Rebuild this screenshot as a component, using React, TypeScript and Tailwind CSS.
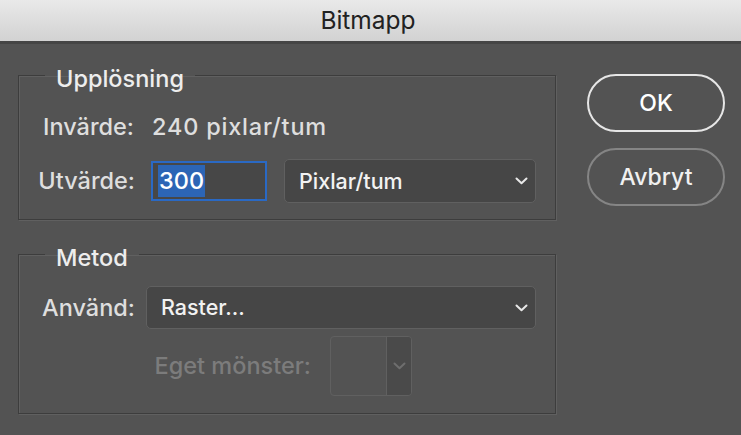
import React from "react";

// ─────────────────────────────
// Bitmapp dialog (Photoshop style)
// ─────────────────────────────
const font = "font-['Inter','Liberation_Sans',sans-serif]";

function Chevron({ className = "" }: { className?: string }) {
  return (
    <svg width="13" height="8" viewBox="0 0 13 8" className={className}>
      <path d="M1.5 1.5 L6.5 6.2 L11.5 1.5" fill="none" stroke="currentColor" strokeWidth="2" strokeLinecap="round" strokeLinejoin="round" />
    </svg>
  );
}

function Group({ title, children, className = "" }: { title: string; children: React.ReactNode; className?: string }) {
  return (
    <fieldset
      className={`border border-[#3d3d3d] shadow-[1px_1px_0_#606060,inset_1px_1px_0_#606060] px-0 ${className}`}
    >
      <legend className="ml-[26px] px-[11px] h-[28px] leading-[36px] text-[23.5px] font-medium text-[#ededed]">{title}</legend>
      {children}
    </fieldset>
  );
}

function Select({ value, className = "" }: { value: string; className?: string }) {
  return (
    <div
      className={`flex items-center justify-between rounded-[5px] border border-[#606060] bg-[#464646] pl-[14px] pr-[7px] text-[21.5px] font-medium text-[#f2f2f2] ${className}`}
    >
      <span>{value}</span>
      <Chevron className="text-[#e8e8e8]" />
    </div>
  );
}

export default function App() {
  return (
    <div className={`w-[741px] h-[435px] bg-[#535353] overflow-hidden ${font}`}>
      {/* タイトルバー */}
      <div className="h-[44px] border-b-[3px] border-[#454545] bg-gradient-to-b from-[#e9e9e9] to-[#d2d2d2] flex items-center justify-center">
        <span className="text-[24.5px] text-[#222] pr-[5px]">Bitmapp</span>
      </div>

      <div className="flex pl-[18px] pt-[17px]">
        {/* 左カラム */}
        <div className="w-[538px] flex flex-col">
          <Group title="Upplösning" className="pb-[16px]">
            <div className="flex items-center h-[28px] mt-[24px] text-[23.5px] font-medium">
              <span className="w-[115px] text-right text-[#dedede]">Invärde:</span>
              <span className="ml-[18px] text-[#dedede] tracking-[0.8px]">240 pixlar/tum</span>
            </div>
            <div className="flex items-center h-[44px] mt-[18px] text-[23.5px] font-medium">
              <span className="w-[116px] text-right text-[#dedede]">Utvärde:</span>
              <div className="ml-[16px] w-[116px] h-[40px] border-2 border-[#2a69c4] bg-[#474747] flex items-center pl-[5px]">
                <span className="bg-[#2c65b5] text-white leading-[32px] px-[1px]">300</span>
              </div>
              <Select value="Pixlar/tum" className="ml-[17px] w-[252px] h-[44px]" />
            </div>
          </Group>

          <Group title="Metod" className="mt-[20px] pb-[17px]">
            <div className="flex items-center h-[43px] mt-[18px] text-[23.5px] font-medium">
              <span className="w-[116px] text-right text-[#dedede]">Använd:</span>
              <Select value="Raster..." className="ml-[11px] w-[390px] h-[43px]" />
            </div>
            <div className="flex items-center h-[60px] mt-[7px] text-[23.5px] font-medium">
              <span className="w-[292px] text-right text-[#7c7c7c]">Eget mönster:</span>
              <div className="ml-[19px] w-[82px] h-[60px] rounded-[4px] border border-[#606060] flex overflow-hidden">
                <div className="flex-1 border-r border-[#606060]" />
                <div className="w-[24px] bg-[#4a4a4a] flex items-center justify-center">
                  <Chevron className="text-[#6e6e6e]" />
                </div>
              </div>
            </div>
          </Group>
        </div>

        {/* 右カラム：ボタン */}
        <div className="ml-[31px] pt-[13px] flex flex-col gap-[16px]">
          <button className="w-[138px] h-[58px] rounded-full border-2 border-[#e6e6e6] text-[23px] font-medium text-white">
            OK
          </button>
          <button className="w-[138px] h-[58px] rounded-full border-2 border-[#858585] text-[23px] font-medium text-[#f0f0f0]">
            Avbryt
          </button>
        </div>
      </div>
    </div>
  );
}
